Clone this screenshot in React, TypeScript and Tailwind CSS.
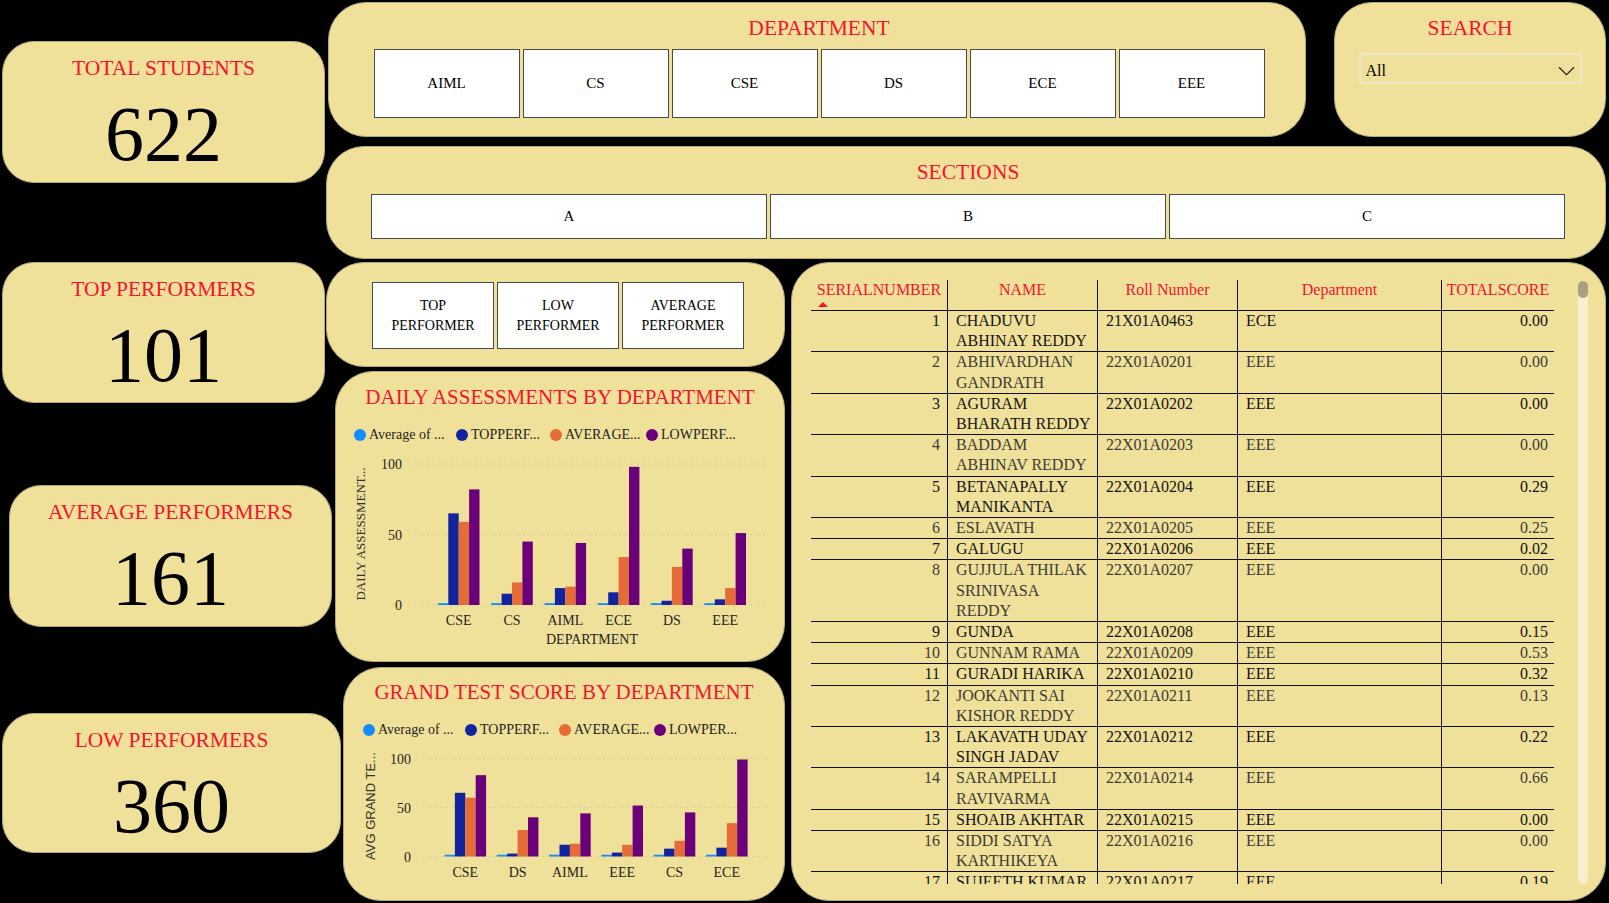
import React from 'react'

const CARD = 'bg-[#efe09a] border border-[#b3a977] shrink-0'

type Row = { n: number; name: string[]; roll: string; dept: string; score: string }

const rows: Row[] = [
    { n: 1, name: ['CHADUVU', 'ABHINAY REDDY'], roll: '21X01A0463', dept: 'ECE', score: '0.00' },
    { n: 2, name: ['ABHIVARDHAN', 'GANDRATH'], roll: '22X01A0201', dept: 'EEE', score: '0.00' },
    { n: 3, name: ['AGURAM', 'BHARATH REDDY'], roll: '22X01A0202', dept: 'EEE', score: '0.00' },
    { n: 4, name: ['BADDAM', 'ABHINAV REDDY'], roll: '22X01A0203', dept: 'EEE', score: '0.00' },
    { n: 5, name: ['BETANAPALLY', 'MANIKANTA'], roll: '22X01A0204', dept: 'EEE', score: '0.29' },
    { n: 6, name: ['ESLAVATH'], roll: '22X01A0205', dept: 'EEE', score: '0.25' },
    { n: 7, name: ['GALUGU'], roll: '22X01A0206', dept: 'EEE', score: '0.02' },
    { n: 8, name: ['GUJJULA THILAK', 'SRINIVASA', 'REDDY'], roll: '22X01A0207', dept: 'EEE', score: '0.00' },
    { n: 9, name: ['GUNDA'], roll: '22X01A0208', dept: 'EEE', score: '0.15' },
    { n: 10, name: ['GUNNAM RAMA'], roll: '22X01A0209', dept: 'EEE', score: '0.53' },
    { n: 11, name: ['GURADI HARIKA'], roll: '22X01A0210', dept: 'EEE', score: '0.32' },
    { n: 12, name: ['JOOKANTI SAI', 'KISHOR REDDY'], roll: '22X01A0211', dept: 'EEE', score: '0.13' },
    { n: 13, name: ['LAKAVATH UDAY', 'SINGH JADAV'], roll: '22X01A0212', dept: 'EEE', score: '0.22' },
    { n: 14, name: ['SARAMPELLI', 'RAVIVARMA'], roll: '22X01A0214', dept: 'EEE', score: '0.66' },
    { n: 15, name: ['SHOAIB AKHTAR'], roll: '22X01A0215', dept: 'EEE', score: '0.00' },
    { n: 16, name: ['SIDDI SATYA', 'KARTHIKEYA'], roll: '22X01A0216', dept: 'EEE', score: '0.00' },
    { n: 17, name: ['SUJEETH KUMAR'], roll: '22X01A0217', dept: 'EEE', score: '0.19' },
]

const BAR_COLORS = ['#118DFF', '#12239E', '#E66C37', '#6B007B']

type Group = { c: string; v: number[] }

const daily: Group[] = [
    { c: 'CSE', v: [1.3, 65, 59, 82] },
    { c: 'CS', v: [1.3, 8, 16, 45] },
    { c: 'AIML', v: [1.3, 12, 13, 44] },
    { c: 'ECE', v: [1.3, 9, 34, 98] },
    { c: 'DS', v: [1.3, 3, 27, 40] },
    { c: 'EEE', v: [1.3, 4, 12, 51] },
]

const grand: Group[] = [
    { c: 'CSE', v: [1.8, 65, 60, 83] },
    { c: 'DS', v: [1.8, 3, 27, 40] },
    { c: 'AIML', v: [1.8, 12, 13, 44] },
    { c: 'EEE', v: [1.8, 4, 12, 52] },
    { c: 'CS', v: [1.8, 8, 16, 45] },
    { c: 'ECE', v: [1.8, 9, 34, 99] },
]

type ChartProps = {
    w: number
    h: number
    zeroY: number
    k: number
    gx1: number
    gx2: number
    tickX: number
    first: number
    step: number
    labelY: number
    data: Group[]
    yTitle: string
    yTitleX: number
    yTitleY: number
    sansTitle?: boolean
    xTitle?: { text: string; x: number; y: number }
}

function BarChart(p: ChartProps) {
    const bw = 10.4
    return (
        <svg width={p.w} height={p.h} className="block">
            {[0, 50, 100].map((t) => (
                <g key={t}>
                    <line
                        x1={p.gx1}
                        x2={p.gx2}
                        y1={p.zeroY - t * p.k}
                        y2={p.zeroY - t * p.k}
                        stroke="#c7c1a1"
                        strokeWidth={1}
                        strokeDasharray="1.5 4.5"
                    />
                    <text
                        x={p.tickX}
                        y={p.zeroY - t * p.k + 5}
                        textAnchor="end"
                        fontSize={14}
                        fill="#252423"
                        fontFamily="Liberation Serif, serif"
                    >
                        {t}
                    </text>
                </g>
            ))}
            {p.data.map((g, i) => {
                const cx = p.first + i * p.step
                const x0 = cx - bw * 2
                return (
                    <g key={g.c}>
                        {g.v.map((v, j) => (
                            <rect
                                key={j}
                                x={x0 + j * bw}
                                y={p.zeroY - v * p.k}
                                width={bw}
                                height={v * p.k}
                                fill={BAR_COLORS[j]}
                            />
                        ))}
                        <text
                            x={cx}
                            y={p.labelY}
                            textAnchor="middle"
                            fontSize={14}
                            fill="#252423"
                            fontFamily="Liberation Serif, serif"
                        >
                            {g.c}
                        </text>
                    </g>
                )
            })}
            {p.xTitle && (
                <text
                    x={p.xTitle.x}
                    y={p.xTitle.y}
                    textAnchor="middle"
                    fontSize={14}
                    fill="#252423"
                    fontFamily="Liberation Serif, serif"
                >
                    {p.xTitle.text}
                </text>
            )}
            <text
                x={p.yTitleX}
                y={p.yTitleY}
                transform={`rotate(-90 ${p.yTitleX} ${p.yTitleY})`}
                textAnchor="middle"
                dominantBaseline="central"
                fontSize={13}
                fill="#333333"
                fontFamily={p.sansTitle ? 'Liberation Sans, sans-serif' : 'Liberation Serif, serif'}
            >
                {p.yTitle}
            </text>
        </svg>
    )
}

const legendDots = ['bg-[#118DFF]', 'bg-[#12239E]', 'bg-[#E66C37]', 'bg-[#6B007B]']

function Legend({ labels, widths, className }: { labels: string[]; widths: string[]; className: string }) {
    return (
        <div className={`flex items-center h-[18px] text-[14px] leading-[18px] text-[#252423] ${className}`}>
            {labels.map((l, i) => (
                <div key={l} className={`flex items-center gap-[3px] whitespace-nowrap ${widths[i]}`}>
                    <span className={`w-[12px] h-[12px] rounded-full shrink-0 ${legendDots[i]}`} />
                    <span>{l}</span>
                </div>
            ))}
        </div>
    )
}

function Kpi({ title, value, className }: { title: string; value: string; className: string }) {
    return (
        <div className={`${CARD} rounded-[32px] flex flex-col items-center ${className}`}>
            <div className="pt-[13px] text-[21.5px] leading-[26px] text-[#f5142e] whitespace-nowrap">{title}</div>
            <div className="mt-[14px] text-[78px] leading-none text-black">{value}</div>
        </div>
    )
}

export default function App() {
    return (
        <div className="w-[1609px] h-[903px] bg-black flex overflow-hidden font-['Liberation_Serif',serif]">
            {/* KPI column */}
            <div className="w-[326px] shrink-0 flex flex-col">
                <Kpi title="TOTAL STUDENTS" value="622" className="mt-[41px] ml-[2px] w-[323px] h-[142px]" />
                <Kpi title="TOP PERFORMERS" value="101" className="mt-[79px] ml-[2px] w-[323px] h-[141px]" />
                <Kpi title="AVERAGE PERFORMERS" value="161" className="mt-[82px] ml-[9px] w-[323px] h-[142px]" />
                <Kpi title="LOW PERFORMERS" value="360" className="mt-[86px] ml-[2px] w-[339px] h-[140px]" />
            </div>

            {/* Right area */}
            <div className="flex-1 flex flex-col">
                {/* Department + search */}
                <div className="flex mt-[2px] h-[135px]">
                    <div className={`${CARD} ml-[2px] w-[978px] h-[135px] rounded-[38px] flex flex-col items-center pl-[4px]`}>
                        <div className="pt-[12px] text-[21.5px] leading-[26px] text-[#f5142e]">DEPARTMENT</div>
                        <div className="mt-[8px] flex gap-[3px]">
                            {['AIML', 'CS', 'CSE', 'DS', 'ECE', 'EEE'].map((d) => (
                                <div
                                    key={d}
                                    className="w-[146px] h-[69px] bg-white border border-[#4a4a4a] flex items-center justify-center text-[15px] text-black"
                                >
                                    {d}
                                </div>
                            ))}
                        </div>
                    </div>
                    <div className={`${CARD} ml-[28px] w-[272px] h-[135px] rounded-[38px] flex flex-col items-center`}>
                        <div className="pt-[12px] text-[21.5px] leading-[26px] text-[#f5142e]">SEARCH</div>
                        <div className="mt-[12px] w-[223px] h-[31px] border-2 border-[#ebe5c9] flex items-center justify-between pl-[5px] pr-[5px] pt-[4px]">
                            <span className="text-[16px] text-black">All</span>
                            <svg width="17" height="10" viewBox="0 0 17 10">
                                <path d="M1 1.2l7.5 7.5L16 1.2" fill="none" stroke="#252423" strokeWidth="1.3" />
                            </svg>
                        </div>
                    </div>
                </div>

                {/* Sections */}
                <div className={`${CARD} mt-[9px] w-[1280px] h-[113px] rounded-[38px] flex flex-col items-center pl-[4px]`}>
                    <div className="pt-[12px] text-[21.5px] leading-[26px] text-[#f5142e]">SECTIONS</div>
                    <div className="mt-[9px] flex gap-[3px]">
                        {['A', 'B', 'C'].map((s) => (
                            <div
                                key={s}
                                className="w-[396px] h-[45px] bg-white border border-[#4a4a4a] flex items-center justify-center text-[15px] text-black"
                            >
                                {s}
                            </div>
                        ))}
                    </div>
                </div>

                {/* Lower area */}
                <div className="flex mt-[3px]">
                    <div className="w-[459px] shrink-0 flex flex-col">
                        <div className={`${CARD} w-[459px] h-[105px] rounded-[38px] flex gap-[3px] pl-[45px] pt-[19px]`}>
                            {[
                                ['TOP', 'PERFORMER'],
                                ['LOW', 'PERFORMER'],
                                ['AVERAGE', 'PERFORMER'],
                            ].map((b) => (
                                <div
                                    key={b[0]}
                                    className="w-[122px] h-[67px] bg-white border border-[#4a4a4a] flex flex-col items-center justify-center text-[14px] leading-[20px] text-black"
                                >
                                    <span>{b[0]}</span>
                                    <span>{b[1]}</span>
                                </div>
                            ))}
                        </div>

                        <div className={`${CARD} ml-[9px] mt-[4px] w-[450px] h-[291px] rounded-[38px]`}>
                            <div className="pt-[12px] text-center text-[21px] leading-[26px] text-[#f5142e] whitespace-nowrap">
                                DAILY ASSESSMENTS BY DEPARTMENT
                            </div>
                            <Legend
                                className="mt-[16px] pl-[18px]"
                                labels={['Average of ...', 'TOPPERF...', 'AVERAGE...', 'LOWPERF...']}
                                widths={['w-[102px]', 'w-[94px]', 'w-[96px]', 'w-[100px]']}
                            />
                            <div className="mt-[6px]">
                                <BarChart
                                    w={450}
                                    h={200}
                                    zeroY={155}
                                    k={1.41}
                                    gx1={79}
                                    gx2={432}
                                    tickX={66}
                                    first={122.7}
                                    step={53.3}
                                    labelY={175}
                                    data={daily}
                                    yTitle="DAILY ASSESSMENT..."
                                    yTitleX={24}
                                    yTitleY={84}
                                    xTitle={{ text: 'DEPARTMENT', x: 256, y: 194 }}
                                />
                            </div>
                        </div>

                        <div className={`${CARD} ml-[17px] mt-[5px] w-[442px] h-[234px] rounded-[38px]`}>
                            <div className="pt-[11px] text-center text-[21px] leading-[26px] text-[#f5142e] whitespace-nowrap">
                                GRAND TEST SCORE BY DEPARTMENT
                            </div>
                            <Legend
                                className="mt-[16px] pl-[19px]"
                                labels={['Average of ...', 'TOPPERF...', 'AVERAGE...', 'LOWPER...']}
                                widths={['w-[102px]', 'w-[94px]', 'w-[95px]', 'w-[100px]']}
                            />
                            <div className="mt-[3px]">
                                <BarChart
                                    w={442}
                                    h={150}
                                    zeroY={114.5}
                                    k={0.98}
                                    gx1={79}
                                    gx2={425}
                                    tickX={67}
                                    first={121.3}
                                    step={52.3}
                                    labelY={135}
                                    data={grand}
                                    yTitle="AVG GRAND TE..."
                                    yTitleX={26}
                                    yTitleY={64}
                                    sansTitle
                                />
                            </div>
                        </div>
                    </div>

                    {/* Table */}
                    <div className={`${CARD} ml-[6px] w-[815px] h-[639px] rounded-[38px] flex pl-[19px] pt-[17px]`}>
                        <div className="w-[743px] h-[604px] overflow-hidden text-[16px] leading-[20.2px]">
                            <div className="flex h-[31px] border-b border-[#111] text-[#f5142e]">
                                <div className="w-[136px] text-center">
                                    SERIALNUMBER
                                    <div className="ml-[7px] mt-[2px] w-0 h-0 border-l-[5.5px] border-r-[5.5px] border-b-[5px] border-l-transparent border-r-transparent border-b-[#f5142e]" />
                                </div>
                                <div className="w-[150px] border-l border-[#111] text-center">NAME</div>
                                <div className="w-[140px] border-l border-[#111] text-center">Roll Number</div>
                                <div className="w-[204px] border-l border-[#111] text-center">Department</div>
                                <div className="w-[113px] border-l border-[#111] text-center">TOTALSCORE</div>
                            </div>
                            {rows.map((r) => (
                                <div
                                    key={r.n}
                                    className={`flex border-b border-[#111] ${r.n % 2 === 1 ? 'text-[#141414]' : 'text-[#3d3c38]'}`}
                                >
                                    <div className="w-[136px] text-right pr-[7px]">{r.n}</div>
                                    <div className="w-[150px] border-l border-[#111] pl-[8px] whitespace-nowrap">
                                        {r.name.map((l) => (
                                            <div key={l}>{l}</div>
                                        ))}
                                    </div>
                                    <div className="w-[140px] border-l border-[#111] pl-[8px]">{r.roll}</div>
                                    <div className="w-[204px] border-l border-[#111] pl-[8px]">{r.dept}</div>
                                    <div className="w-[113px] border-l border-[#111] text-right pr-[6px]">{r.score}</div>
                                </div>
                            ))}
                        </div>
                        <div className="ml-[24px] mt-[1px] w-[10px] h-[603px] rounded-full bg-[#f8efcc]">
                            <div className="w-[10px] h-[17px] rounded-full bg-[#a8a07f]" />
                        </div>
                    </div>
                </div>
            </div>
        </div>
    )
}
